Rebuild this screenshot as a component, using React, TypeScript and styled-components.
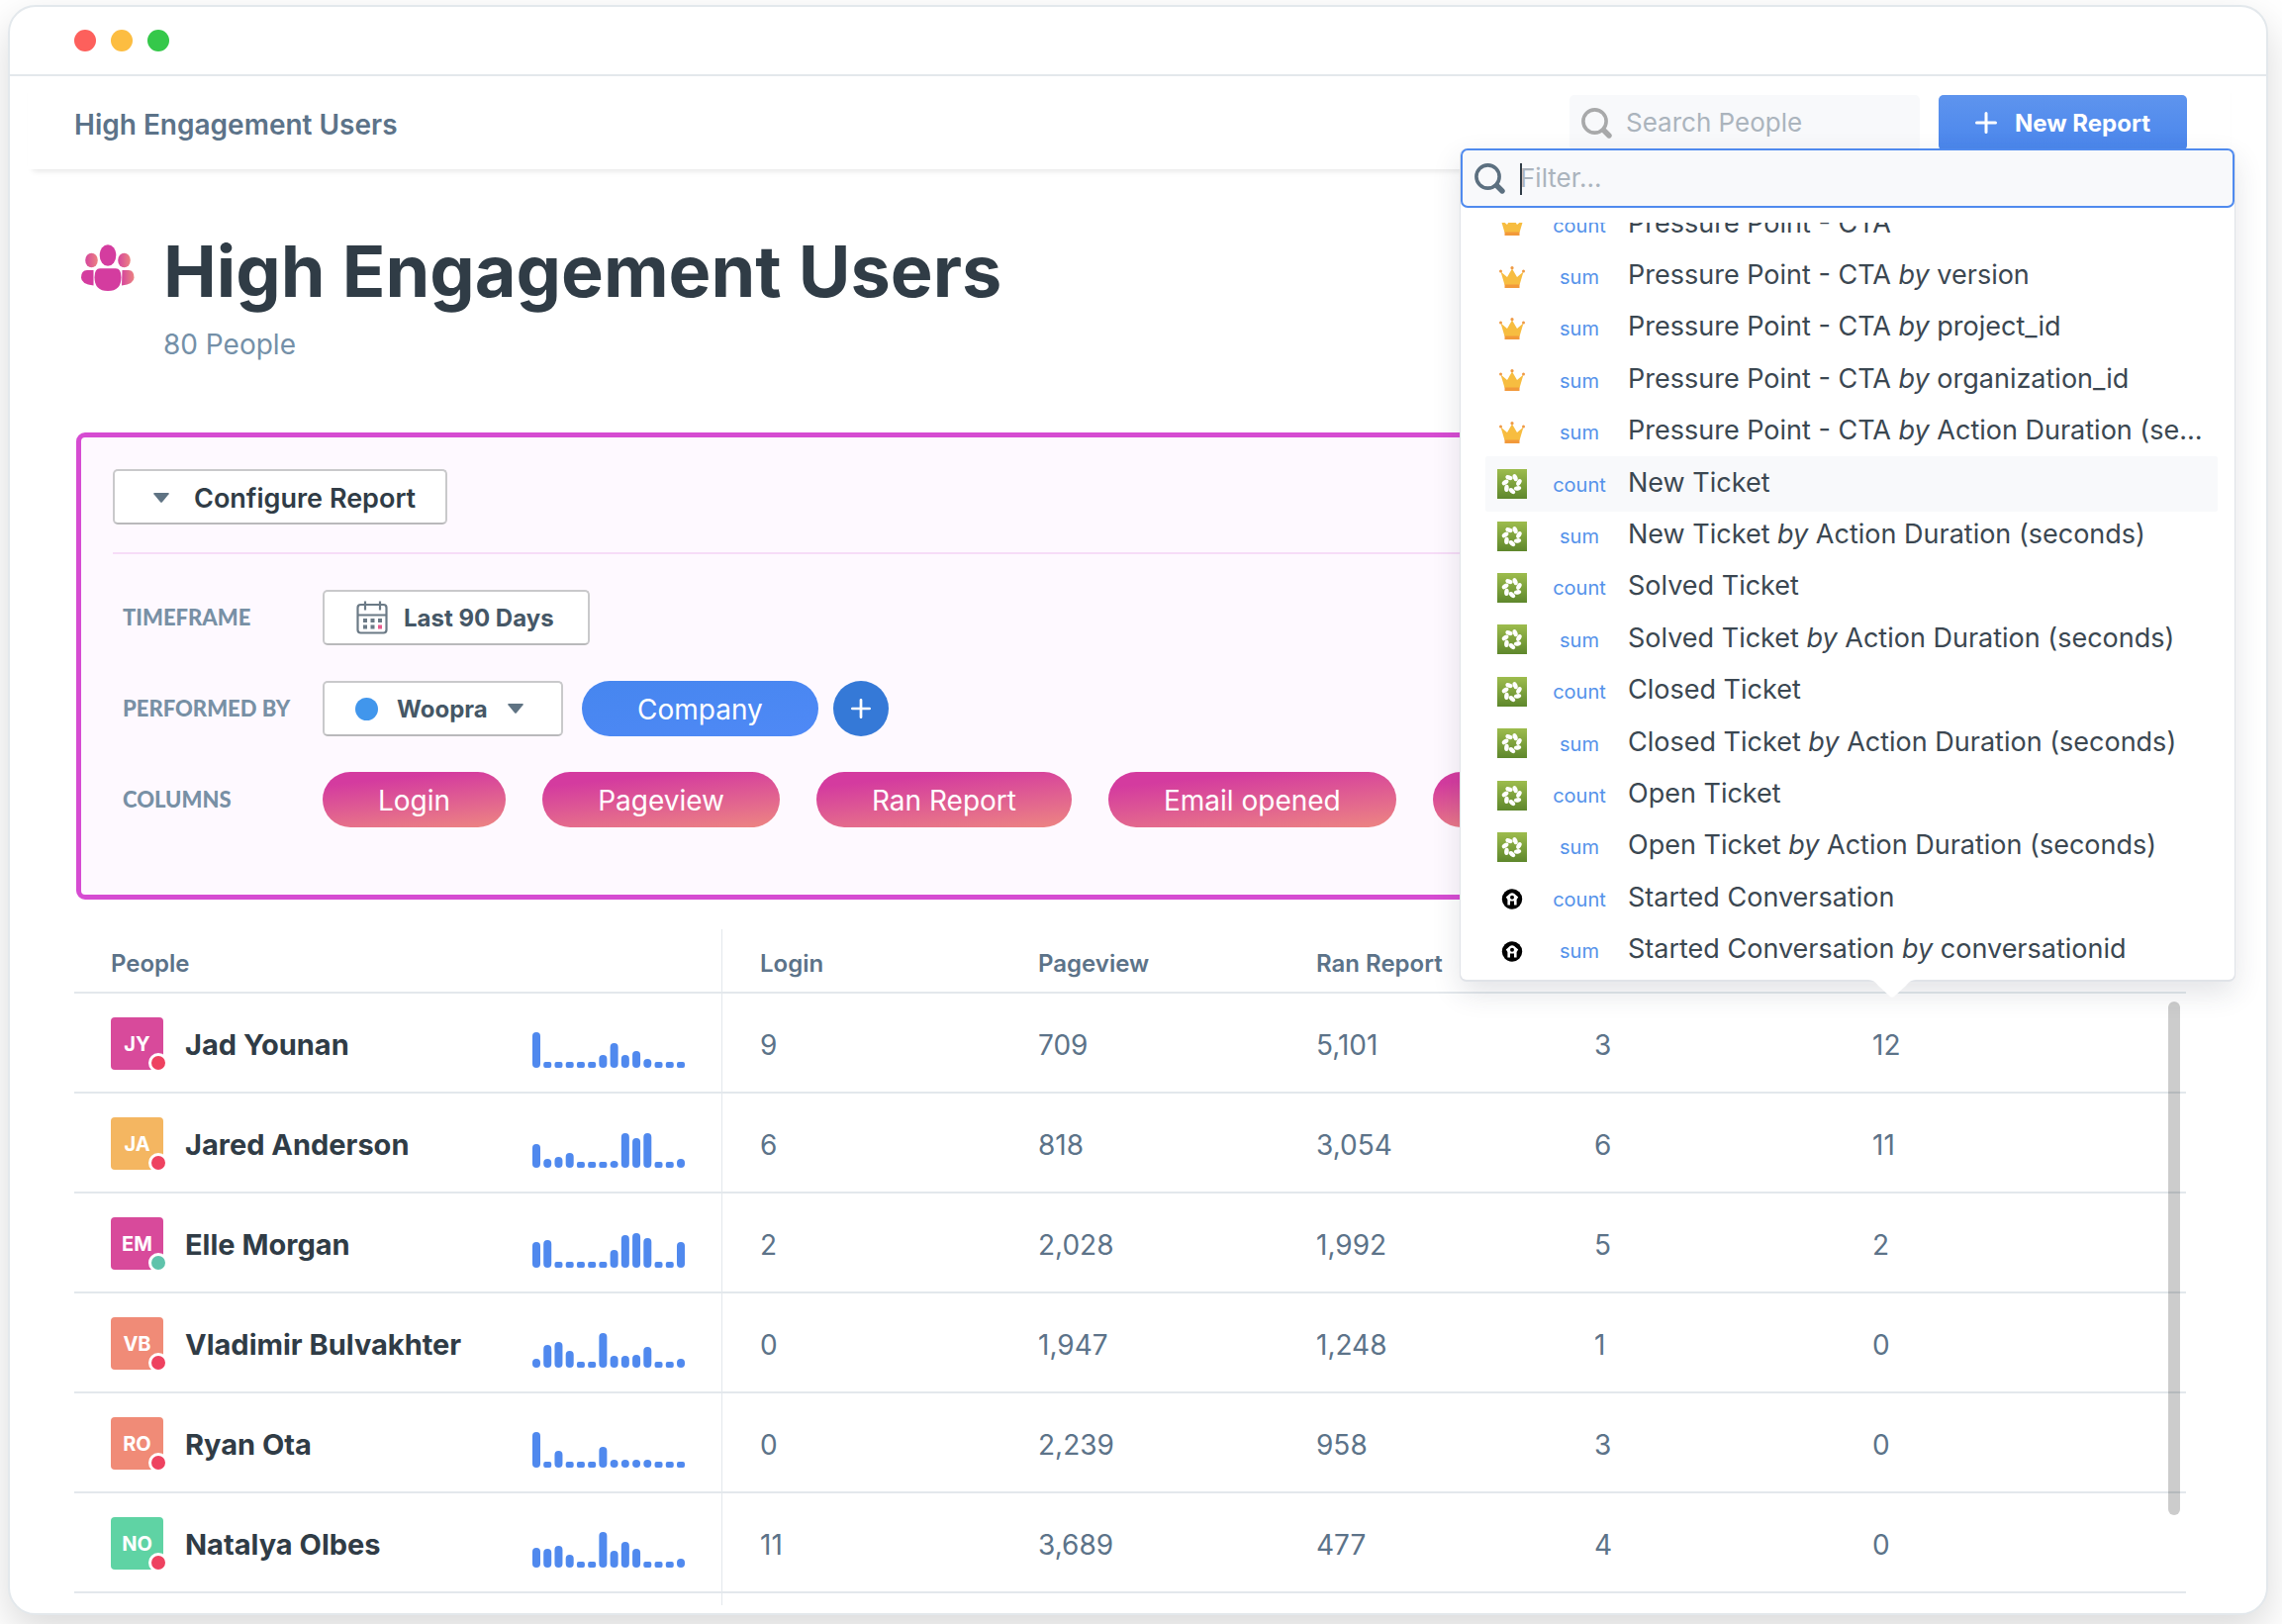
import React from "react";
import styled, { createGlobalStyle, css } from "styled-components";

const sans = `Inter, "Liberation Sans", sans-serif`;
const display = `Lato, "Liberation Sans", sans-serif`;

const color = {
  ink: "#303c46",
  body: "#3b4751",
  slate: "#5c7389",
  label: "#7490a8",
  line: "#e3e8ec",
  field: "#f8f9fb",
  magenta: "#d64cd2",
  placeholder: "#abb4bd",
};

const GlobalStyle = createGlobalStyle`
  *, *::before, *::after { box-sizing: border-box; }
  html { background: #fff; }
  body { margin: 0; font-family: ${sans}; color: ${color.ink}; }
  button, input, select { font-family: inherit; color: inherit; }
`;

const Page = styled.div`
  padding: 5px 14px 9px 8px;
`;

const Window = styled.div`
  position: relative;
  background: #fff;
  border: 2px solid ${color.line};
  border-radius: 28px;
  box-shadow: 0 16px 40px rgba(0, 0, 0, 0.15);
`;

const TitleBar = styled.div`
  display: flex;
  align-items: center;
  gap: 15px;
  height: 70px;
  padding-left: 65px;
  border-bottom: 2px solid ${color.line};
`;

const Light = styled.span<{ $fill: string }>`
  width: 22px;
  height: 22px;
  border-radius: 50%;
  background: ${(p) => p.$fill};
`;

const TopBar = styled.header`
  display: flex;
  align-items: center;
  height: 94px;
  margin: 0 36px 0 18px;
  padding: 0 44px 0 47px;
  box-shadow: 0 7px 6px -5px rgba(0, 0, 0, 0.1);
`;

const Crumb = styled.a`
  flex: 1;
  padding-top: 4px;
  font-size: 28px;
  line-height: 32px;
  font-weight: 600;
  color: ${color.slate};
  text-decoration: none;
`;

const SearchBox = styled.label`
  display: flex;
  align-items: center;
  gap: 14px;
  width: 354px;
  height: 56px;
  margin-right: 19px;
  padding: 0 12px;
  border-radius: 5px;
  background: ${color.field};
  color: #a8a9aa;
`;

const TextInput = styled.input`
  flex: 1;
  min-width: 0;
  padding: 0;
  border: 0;
  outline: 0;
  background: transparent;
  font-size: 26px;
  line-height: 32px;
  color: ${color.ink};
  &::placeholder {
    color: ${color.placeholder};
    opacity: 1;
  }
`;

const PrimaryButton = styled.button`
  display: flex;
  align-items: center;
  justify-content: center;
  gap: 18px;
  width: 251px;
  height: 56px;
  padding: 0;
  border: 0;
  border-radius: 5px;
  background: linear-gradient(#5e94ee, #4a86ec);
  color: #fff;
  font-size: 24px;
  font-weight: 700;
`;

const Main = styled.main`
  padding: 61px 81px 8px 65px;
`;

const Heading = styled.div`
  display: grid;
  grid-template-columns: 54px 1fr;
  column-gap: 29px;
  padding-left: 7px;
  margin-bottom: 69px;
`;

const HeadingIcon = styled.div`
  padding-top: 15px;
`;

const Title = styled.h1`
  margin: 0;
  font-size: 72px;
  line-height: 84px;
  font-weight: 700;
`;

const Subtitle = styled.p`
  grid-column: 2;
  margin: 12px 0 0;
  font-size: 28px;
  line-height: 40px;
  color: ${color.label};
`;

const Panel = styled.section`
  margin-left: 2px;
  padding: 32px 32px 68px;
  border: 5px solid ${color.magenta};
  border-radius: 9px;
  background: #fef9ff;
`;

const outline = css`
  height: 56px;
  border: 2px solid #c9c9cb;
  border-bottom-color: #b9b9bb;
  border-radius: 5px;
  background: #fff;
  color: #455766;
  font-size: 24px;
  font-weight: 700;
`;

const ConfigureButton = styled.button`
  ${outline}
  display: flex;
  align-items: center;
  gap: 25px;
  padding: 2px 30px 0 39px;
  font-size: 27px;
  font-weight: 600;
  color: ${color.ink};
`;

const Divider = styled.hr`
  height: 2px;
  margin: 28px 0 36px;
  border: 0;
  background: #f7dcf8;
`;

const Settings = styled.div`
  display: grid;
  row-gap: 36px;
`;

const Setting = styled.div`
  display: grid;
  grid-template-columns: 212px minmax(0, 1fr);
  align-items: center;
`;

const SettingLabel = styled.span`
  padding-left: 10px;
  font-family: ${display};
  font-size: 22px;
  line-height: 28px;
  font-weight: 900;
  color: #7890a5;
`;

const Controls = styled.div<{ $gap: number }>`
  display: flex;
  align-items: center;
  gap: ${(p) => p.$gap}px;
`;

const DateButton = styled.button`
  ${outline}
  display: flex;
  align-items: center;
  gap: 16px;
  padding: 0 34px 0 32px;
`;

const SelectBox = styled.label`
  ${outline}
  display: flex;
  align-items: center;
  padding: 0 38px 0 31px;
`;

const SourceDot = styled.span`
  width: 23px;
  height: 23px;
  margin-right: 19px;
  border-radius: 50%;
  background: #4196ec;
`;

const Select = styled.select`
  appearance: none;
  margin: 0 20px 0 0;
  padding: 0;
  border: 0;
  outline: 0;
  background: transparent;
  font-size: 24px;
  font-weight: 700;
`;

const Pill = styled.button<{ $tone: "blue" | "pink" }>`
  height: 56px;
  padding: 2px 56px 0;
  border: 0;
  border-radius: 28px;
  background: ${(p) =>
    p.$tone === "blue"
      ? "linear-gradient(170deg, #4686ef, #4f89f6)"
      : "linear-gradient(174deg, #d43b9f 18%, #ed8682)"};
  color: #fff;
  font-size: 28px;
  font-weight: 400;
  white-space: nowrap;
`;

const AddButton = styled.button`
  display: grid;
  place-items: center;
  width: 56px;
  height: 56px;
  margin-left: -4px;
  padding: 0;
  border: 0;
  border-radius: 50%;
  background: #3579d7;
  color: #fff;
`;

const TableWrap = styled.div`
  position: relative;
  margin-top: 30px;
`;

const Table = styled.table`
  width: 100%;
  table-layout: fixed;
  border-spacing: 0;
`;

const HeadCell = styled.th<{ $width?: number; $lead?: boolean }>`
  width: ${(p) => (p.$width ? `${p.$width}px` : "auto")};
  height: 65px;
  padding: 5px 0 0 ${(p) => (p.$lead ? 37 : 38)}px;
  border-bottom: 2px solid ${color.line};
  border-right: ${(p) => (p.$lead ? `1px solid ${color.line}` : "0")};
  text-align: left;
  font-size: 24px;
  font-weight: 600;
  color: ${color.slate};
`;

const PersonCell = styled.td`
  height: 101px;
  padding: 2px 37px 0;
  border-bottom: 2px solid ${color.line};
  border-right: 1px solid ${color.line};
`;

const ValueCell = styled.td`
  padding: 5px 0 0 38px;
  border-bottom: 2px solid ${color.line};
  font-size: 28px;
  color: ${color.slate};
`;

const TailCell = styled.td`
  height: 12px;
  padding: 0;
  border-right: 1px solid ${color.line};
`;

const Person = styled.div`
  display: flex;
  align-items: center;
  gap: 22px;
`;

const Avatar = styled.span<{ $fill: string }>`
  position: relative;
  display: grid;
  place-items: center;
  width: 53px;
  height: 53px;
  border-radius: 4px;
  background: ${(p) => p.$fill};
  color: #fff;
  font-size: 20px;
  font-weight: 700;
`;

const Presence = styled.span<{ $online: boolean }>`
  position: absolute;
  right: -5px;
  bottom: -3px;
  width: 20px;
  height: 20px;
  border: 3px solid #fff;
  border-radius: 50%;
  background: ${(p) => (p.$online ? "#5fc3ab" : "#ee4260")};
`;

const Name = styled.span`
  flex: 1;
  padding-top: 3px;
  font-size: 29px;
  line-height: 36px;
  font-weight: 700;
`;

const Spark = styled.svg`
  display: block;
  margin-top: 13px;
`;

const ScrollThumb = styled.div`
  position: absolute;
  top: 73px;
  right: 6px;
  bottom: 91px;
  width: 12px;
  border-radius: 6px;
  background: rgba(0, 0, 0, 0.2);
`;

const Popover = styled.div`
  position: absolute;
  top: 143px;
  right: 32px;
  width: 782px;
  border-radius: 6px;
  background: #fff;
  box-shadow: 0 1px 0 1px #e0e3e8, 0 12px 30px rgba(40, 50, 70, 0.14);
`;

const FilterBox = styled.label`
  position: relative;
  display: flex;
  align-items: center;
  gap: 15px;
  height: 60px;
  padding: 0 12px;
  border: 2px solid #4f8aee;
  border-radius: 7px;
  background: ${color.field};
  color: #5c7080;
`;

const Caret = styled.span`
  position: absolute;
  left: 58px;
  top: 13px;
  width: 2px;
  height: 32px;
  background: ${color.ink};
`;

const Clip = styled.div`
  margin-top: 15px;
  padding: 0 17px 0 25px;
  overflow: hidden;
`;

const MetricList = styled.ul`
  display: grid;
  grid-auto-rows: 1fr;
  height: 786px;
  margin: -24px 0 3px;
  padding: 0;
  list-style: none;
`;

const MetricItem = styled.li`
  display: grid;
`;

const MetricButton = styled.button<{ $active: boolean }>`
  display: grid;
  grid-template-columns: 30px 72px minmax(0, 1fr);
  column-gap: 15px;
  align-items: center;
  padding: 0 9px 0 12px;
  border: 0;
  border-radius: 2px;
  background: ${(p) => (p.$active ? color.field : "transparent")};
  box-shadow: ${(p) => (p.$active ? `0 2px 0 ${color.field}, 0 -2px 0 ${color.field}` : "none")};
  text-align: left;
`;

const Kind = styled.span`
  padding: 1px 0 0 4px;
  font-size: 20px;
  line-height: 28px;
  text-align: center;
  color: #5592ea;
`;

const MetricName = styled.span`
  overflow: hidden;
  padding-bottom: 3px;
  font-size: 27px;
  line-height: 36px;
  white-space: nowrap;
  text-overflow: ellipsis;
  color: ${color.body};
`;

const SearchIcon = () => (
  <svg width="31" height="31" viewBox="0 0 31 31" fill="none" stroke="currentColor" aria-hidden="true">
    <circle cx="13.5" cy="13.5" r="11.6" strokeWidth="3.6" />
    <path d="M22.5 22.5 28 28" strokeWidth="5.4" strokeLinecap="round" />
  </svg>
);

const PlusIcon = ({ size }: { size: number }) => (
  <svg width={size} height={size} viewBox="0 0 22 22" fill="none" stroke="currentColor" strokeWidth="3" strokeLinecap="round" aria-hidden="true">
    <path d="M11 1.5v19M1.5 11h19" />
  </svg>
);

const Triangle = () => (
  <svg width="16" height="10" viewBox="0 0 16 10" fill="#5f7383" aria-hidden="true">
    <path d="M1 0h14q1.400 0 .6 1.200L9 9.300q-1 1-2 0L.4 1.200Q-.4 0 1 0Z" />
  </svg>
);

const CalendarIcon = () => (
  <svg width="32" height="34" viewBox="0 0 32 34" fill="none" stroke="#6b7a86" aria-hidden="true">
    <rect x="1.500" y="4" width="29" height="28.500" rx="3" strokeWidth="2.200" />
    <path d="M1.500 14.500h29M9 0.500v9M24 0.500v9" strokeWidth="2.200" />
    <g stroke="none" fill="#6b7a86">
      <rect x="7" y="18" width="4" height="4" />
      <rect x="14.500" y="18" width="4" height="4" />
      <rect x="22" y="18" width="4" height="4" />
      <rect x="7" y="24.500" width="4" height="4" />
      <rect x="14.500" y="24.500" width="4" height="4" />
      <rect x="22" y="24.500" width="4" height="4" fill="#e85a8c" />
    </g>
  </svg>
);

const PeopleIcon = () => (
  <svg width="54" height="48" viewBox="0 0 54 48" aria-hidden="true">
    <defs>
      <linearGradient id="side">
        <stop offset="0" stopColor="#d5459d" />
        <stop offset="1" stopColor="#ec8381" />
      </linearGradient>
    </defs>
    <ellipse cx="10.500" cy="16" rx="6.300" ry="7.300" fill="url(#side)" />
    <ellipse cx="43.500" cy="16" rx="6.300" ry="7.300" fill="url(#side)" />
    <path d="M12.500 26H6q-6 0-6 7.500Q0 40 12.500 41.500Z" fill="#d43c9f" />
    <path d="M41.500 26H48q5.500 0 5.500 7.500 0 6.500-12.500 8Z" fill="url(#side)" />
    <ellipse cx="27" cy="11" rx="8.300" ry="10.800" fill="#d43c9f" />
    <path d="M19 24.200h16q5.500 0 5.500 9Q40.500 47 27 47T13.500 33.200q0-9 5.500-9Z" fill="#d43c9f" />
  </svg>
);

const CrownIcon = () => (
  <svg width="30" height="30" viewBox="0 0 30 30" aria-hidden="true">
    <path d="M3.500 9.500 10 15l5-8.500L20 15l6.500-5.500L22.500 23h-15Z" fill="#f7bd40" />
    <path d="M7.500 22.500h15V26h-15Z" fill="#f2993a" />
    <g fill="#ef9a45">
      <circle cx="3.500" cy="9" r="1.500" />
      <circle cx="26.500" cy="9" r="1.500" />
      <circle cx="15" cy="5.700" r="1.600" />
    </g>
  </svg>
);

const TicketIcon = () => (
  <svg width="30" height="30" viewBox="0 0 30 30" aria-hidden="true">
    <defs>
      <linearGradient id="leaf" x2="0" y2="1">
        <stop offset="0" stopColor="#9dbc4d" />
        <stop offset="1" stopColor="#5e872c" />
      </linearGradient>
    </defs>
    <rect width="30" height="30" fill="url(#leaf)" />
    {[0, 1, 2, 3, 4, 5, 6].map((i) => (
      <ellipse
        key={i}
        cx="15"
        cy="7.900"
        rx="2.300"
        ry="3.700"
        fill="#fff"
        transform={`rotate(${i * (360 / 7) + 26} 15 15) rotate(-48 15 7.900)`}
      />
    ))}
  </svg>
);

const ChatIcon = () => (
  <svg width="30" height="30" viewBox="0 0 30 30" aria-hidden="true">
    <circle cx="15" cy="15.500" r="10.200" fill="#000" />
    <path d="M8.800 13.500 12.800 10q2.200-1.300 4.400 0l4 3.500-1.600 2.400v5.600h-2.600v-4h-4v4h-2.600v-5.600Z" fill="#fff" />
    <circle cx="15" cy="13.800" r="2" fill="#000" />
  </svg>
);

const icons = { crown: CrownIcon, ticket: TicketIcon, chat: ChatIcon };

type Metric = { icon: keyof typeof icons; kind: "count" | "sum"; name: string; by?: string };

const duration = "Action Duration (seconds)";

const metrics: Metric[] = [
  { icon: "crown", kind: "count", name: "Pressure Point - CTA" },
  { icon: "crown", kind: "sum", name: "Pressure Point - CTA", by: "version" },
  { icon: "crown", kind: "sum", name: "Pressure Point - CTA", by: "project_id" },
  { icon: "crown", kind: "sum", name: "Pressure Point - CTA", by: "organization_id" },
  { icon: "crown", kind: "sum", name: "Pressure Point - CTA", by: duration },
  { icon: "ticket", kind: "count", name: "New Ticket" },
  { icon: "ticket", kind: "sum", name: "New Ticket", by: duration },
  { icon: "ticket", kind: "count", name: "Solved Ticket" },
  { icon: "ticket", kind: "sum", name: "Solved Ticket", by: duration },
  { icon: "ticket", kind: "count", name: "Closed Ticket" },
  { icon: "ticket", kind: "sum", name: "Closed Ticket", by: duration },
  { icon: "ticket", kind: "count", name: "Open Ticket" },
  { icon: "ticket", kind: "sum", name: "Open Ticket", by: duration },
  { icon: "chat", kind: "count", name: "Started Conversation" },
  { icon: "chat", kind: "sum", name: "Started Conversation", by: "conversationid" },
];

const people = [
  { initials: "JY", name: "Jad Younan", fill: "#d84a9b", online: false, bars: [36, 6, 6, 6, 6, 6, 13, 25, 13, 17, 9, 6, 6, 6], values: ["9", "709", "5,101", "3", "12"] },
  { initials: "JA", name: "Jared Anderson", fill: "#f4b661", online: false, bars: [24, 9, 11, 15, 6, 6, 6, 7, 35, 30, 35, 6, 6, 9], values: ["6", "818", "3,054", "6", "11"] },
  { initials: "EM", name: "Elle Morgan", fill: "#d84a9b", online: true, bars: [26, 28, 6, 6, 6, 6, 6, 18, 33, 35, 30, 6, 6, 26], values: ["2", "2,028", "1,992", "5", "2"] },
  { initials: "VB", name: "Vladimir Bulvakhter", fill: "#f08b77", online: false, bars: [9, 23, 26, 17, 6, 6, 35, 12, 12, 13, 21, 6, 6, 9], values: ["0", "1,947", "1,248", "1", "0"] },
  { initials: "RO", name: "Ryan Ota", fill: "#f08b77", online: false, bars: [36, 6, 17, 6, 6, 6, 21, 8, 8, 8, 8, 6, 6, 6], values: ["0", "2,239", "958", "3", "0"] },
  { initials: "NO", name: "Natalya Olbes", fill: "#5fd3a4", online: false, bars: [20, 19, 22, 13, 6, 6, 36, 17, 26, 19, 6, 6, 6, 9], values: ["11", "3,689", "477", "4", "0"] },
];

const Sparkline = ({ bars }: { bars: number[] }) => (
  <Spark width="154" height="36" viewBox="0 0 154 36" fill="#5089ee" aria-hidden="true">
    {bars.map((h, i) => (
      <rect key={i} x={i * 11.23} y={36 - h} width="8" height={h} rx={h > 6 ? 4 : 2} />
    ))}
  </Spark>
);

const Pointer = styled.svg`
  position: absolute;
  top: 100%;
  right: 322px;
`;

const MetricPicker = () => (
  <Popover>
    <FilterBox>
      <SearchIcon />
      <TextInput type="text" placeholder="Filter..." aria-label="Filter" />
      <Caret />
    </FilterBox>
    <Clip>
      <MetricList>
        {metrics.map((m, i) => {
          const Icon = icons[m.icon];
          return (
            <MetricItem key={i}>
              <MetricButton type="button" $active={i === 5}>
                <Icon />
                <Kind>{m.kind}</Kind>
                <MetricName>
                  {m.name}
                  {m.by && (
                    <>
                      {" "}
                      <em>by</em> {m.by}
                    </>
                  )}
                </MetricName>
              </MetricButton>
            </MetricItem>
          );
        })}
      </MetricList>
    </Clip>
    <Pointer width="48" height="20" viewBox="0 0 48 20" aria-hidden="true">
      <path d="M0 0h48q-6 0-10 6l-12 11q-2 1.500-4 0L10 6Q6 0 0 0Z" fill="#fff" />
    </Pointer>
  </Popover>
);

export default function App() {
  return (
    <>
      <GlobalStyle />
      <Page>
        <Window>
          <TitleBar>
            <Light $fill="#fd605c" />
            <Light $fill="#fcbd41" />
            <Light $fill="#35c84a" />
          </TitleBar>
          <TopBar>
            <Crumb href="#">High Engagement Users</Crumb>
            <SearchBox>
              <SearchIcon />
              <TextInput type="search" placeholder="Search People" aria-label="Search People" />
            </SearchBox>
            <PrimaryButton type="button">
              <PlusIcon size={22} />
              New Report
            </PrimaryButton>
          </TopBar>
          <Main>
            <Heading>
              <HeadingIcon>
                <PeopleIcon />
              </HeadingIcon>
              <Title>High Engagement Users</Title>
              <Subtitle>80 People</Subtitle>
            </Heading>
            <Panel>
              <ConfigureButton type="button">
                <Triangle />
                Configure Report
              </ConfigureButton>
              <Divider />
              <Settings>
                <Setting>
                  <SettingLabel>TIMEFRAME</SettingLabel>
                  <Controls $gap={19}>
                    <DateButton type="button">
                      <CalendarIcon />
                      Last 90 Days
                    </DateButton>
                  </Controls>
                </Setting>
                <Setting>
                  <SettingLabel id="performed-by">PERFORMED BY</SettingLabel>
                  <Controls $gap={19}>
                    <SelectBox>
                      <SourceDot />
                      <Select aria-labelledby="performed-by" defaultValue="Woopra">
                        <option>Woopra</option>
                      </Select>
                      <Triangle />
                    </SelectBox>
                    <Pill type="button" $tone="blue">Company</Pill>
                    <AddButton type="button" aria-label="Add">
                      <PlusIcon size={20} />
                    </AddButton>
                  </Controls>
                </Setting>
                <Setting>
                  <SettingLabel>COLUMNS</SettingLabel>
                  <Controls $gap={37}>
                    <Pill type="button" $tone="pink">Login</Pill>
                    <Pill type="button" $tone="pink">Pageview</Pill>
                    <Pill type="button" $tone="pink">Ran Report</Pill>
                    <Pill type="button" $tone="pink">Email opened</Pill>
                    <Pill type="button" $tone="pink" />
                  </Controls>
                </Setting>
              </Settings>
            </Panel>
            <TableWrap>
              <Table>
                <thead>
                  <tr>
                    <HeadCell $width={655} $lead>People</HeadCell>
                    <HeadCell $width={281}>Login</HeadCell>
                    <HeadCell $width={281}>Pageview</HeadCell>
                    <HeadCell $width={281}>Ran Report</HeadCell>
                    <HeadCell $width={281} />
                    <HeadCell />
                  </tr>
                </thead>
                <tbody>
                  {people.map((p) => (
                    <tr key={p.name}>
                      <PersonCell>
                        <Person>
                          <Avatar $fill={p.fill}>
                            {p.initials}
                            <Presence $online={p.online} />
                          </Avatar>
                          <Name>{p.name}</Name>
                          <Sparkline bars={p.bars} />
                        </Person>
                      </PersonCell>
                      {p.values.map((v, i) => (
                        <ValueCell key={i}>{v}</ValueCell>
                      ))}
                    </tr>
                  ))}
                  <tr>
                    <TailCell />
                  </tr>
                </tbody>
              </Table>
              <ScrollThumb />
            </TableWrap>
          </Main>
          <MetricPicker />
        </Window>
      </Page>
    </>
  );
}
